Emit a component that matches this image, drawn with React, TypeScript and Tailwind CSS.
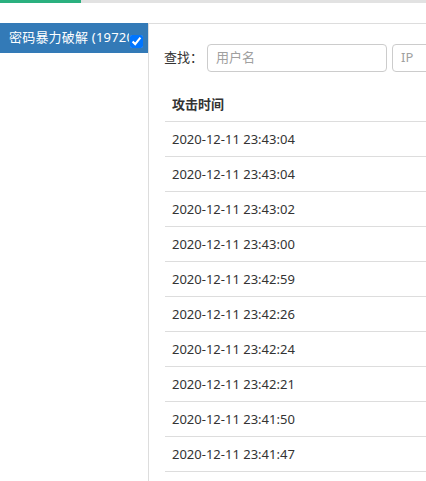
const times = [
  "2020-12-11 23:43:04",
  "2020-12-11 23:43:04",
  "2020-12-11 23:43:02",
  "2020-12-11 23:43:00",
  "2020-12-11 23:42:59",
  "2020-12-11 23:42:26",
  "2020-12-11 23:42:24",
  "2020-12-11 23:42:21",
  "2020-12-11 23:41:50",
  "2020-12-11 23:41:47",
];

export default function App() {
  return (
    <div className="min-h-[481px] w-[426px] overflow-hidden bg-white font-['Noto_Sans','Noto_Sans_CJK_SC',sans-serif] text-[13px] text-[#333]">
      {/* Tab underline */}
      <div className="flex h-[3px]">
        <div className="w-[81px] bg-[#2ab07f]" />
        <div className="flex-1 bg-[#e2e2e2]" />
      </div>

      <div className="mt-[20px] flex min-h-[458px]">
        {/* Sidebar */}
        <div className="w-[148px] shrink-0">
          <div className="relative flex h-[30px] items-center bg-[#337ab7] pl-[9px] text-white">
            <span className="block w-[120px] overflow-hidden whitespace-nowrap tracking-[0.2px]">
              密码暴力破解 (19720条)
            </span>
            <input
              type="checkbox"
              checked
              readOnly
              className="absolute left-[130px] top-[12px] m-0 h-[13px] w-[13px] accent-[#0075ff]"
            />
          </div>
        </div>

        {/* Main panel */}
        <div className="flex-1 border-l border-t border-[#dddddd] pl-[15px] pt-[20px]">
          <div className="flex items-center whitespace-nowrap">
            <span className="w-[43px]">查找：</span>
            <div className="flex h-[28px] w-[180px] shrink-0 items-center rounded-[4px] border border-[#cccccc] pl-[8px] text-[#a0a0a0]">
              用户名
            </div>
            <div className="ml-[5px] flex h-[28px] w-[180px] shrink-0 items-center rounded-[4px] border border-[#cccccc] pl-[8px] text-[#a0a0a0]">
              IP
            </div>
          </div>

          <div className="mt-[15px] ml-px">
            <div className="flex h-[35px] items-center border-b border-[#dddddd] pl-[7px] pt-px font-bold">
              攻击时间
            </div>
            {times.map((t, i) => (
              <div
                key={i}
                className="flex h-[35px] items-center border-b border-[#dddddd] pl-[7px] pt-px"
              >
                {t}
              </div>
            ))}
          </div>
        </div>
      </div>
    </div>
  );
}
